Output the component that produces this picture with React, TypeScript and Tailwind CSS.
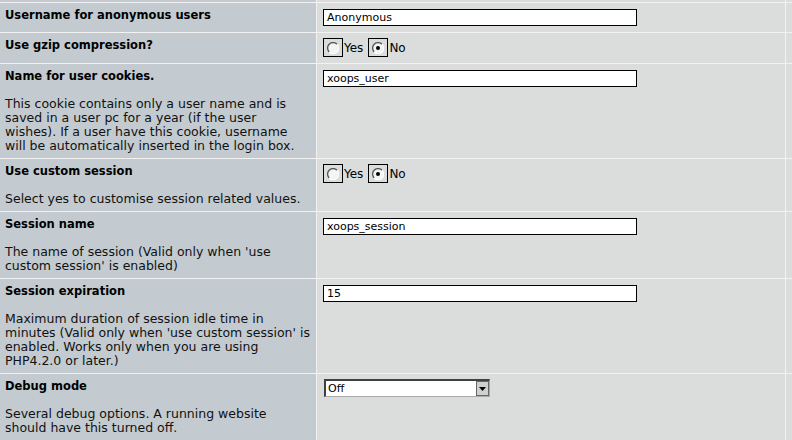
import type { ReactNode } from "react"

const font = "font-['DejaVu_Sans',Verdana,sans-serif]"

function TextBox({ value }: { value: string }) {
  return (
    <div className="h-[17px] w-[314px] border border-black bg-white pl-[3px] text-[11px] leading-[15px] text-black">
      {value}
    </div>
  )
}

function RadioMark({ checked }: { checked?: boolean }) {
  return (
    <span className="flex h-[19px] w-[20px] items-center justify-center border border-black">
      <svg width="12" height="12" viewBox="0 0 12 12">
        <circle cx="6" cy="6" r="5" fill="#f4f4f2" />
        <path d="M10 2.2 A5 5 0 0 0 2.2 10" fill="none" stroke="#555" strokeWidth="1.3" />
        <path d="M2.2 10 A5 5 0 0 0 10 2.2" fill="none" stroke="#fff" strokeWidth="1.3" />
        {checked && <circle cx="6" cy="6" r="2" fill="#000" />}
      </svg>
    </span>
  )
}

function YesNo({ yes }: { yes?: boolean }) {
  return (
    <div className="flex items-center text-[12px] text-black">
      <RadioMark checked={yes} />
      <span className="ml-px">Yes</span>
      <span className="ml-[5px]">
        <RadioMark checked={!yes} />
      </span>
      <span className="ml-px">No</span>
    </div>
  )
}

function Select({ value }: { value: string }) {
  return (
    <div className="ml-px flex h-[18px] w-[166px] border-t-2 border-l-2 border-b border-r border-t-[#404040] border-l-[#404040] border-b-[#aaa] border-r-[#aaa] bg-white">
      <span className="flex-1 pl-[2px] text-[11px] leading-[15px] text-black">{value}</span>
      <span className="flex w-[13px] items-center justify-center border border-[#666] bg-[#cfcfcf]">
        <svg width="7" height="4" viewBox="0 0 7 4">
          <path d="M0 0 H7 L3.5 4 Z" fill="#000" />
        </svg>
      </span>
    </div>
  )
}

interface Row {
  label: string
  desc?: string[]
  control: ReactNode
  height?: string
  pad: string
}

const rows: Row[] = [
  { label: "Username for anonymous users", control: <TextBox value="Anonymous" />, height: "h-[29px]", pad: "pt-[6px]" },
  { label: "Use gzip compression?", control: <YesNo />, height: "h-[30px]", pad: "pt-[5px]" },
  {
    label: "Name for user cookies.",
    desc: [
      "This cookie contains only a user name and is",
      "saved in a user pc for a year (if the user",
      "wishes). If a user have this cookie, username",
      "will be automatically inserted in the login box.",
    ],
    control: <TextBox value="xoops_user" />,
    pad: "pt-[6px]",
  },
  {
    label: "Use custom session",
    desc: ["Select yes to customise session related values."],
    control: <YesNo />,
    pad: "pt-[5px]",
  },
  {
    label: "Session name",
    desc: ["The name of session (Valid only when 'use", "custom session' is enabled)"],
    control: <TextBox value="xoops_session" />,
    pad: "pt-[6px]",
  },
  {
    label: "Session expiration",
    desc: [
      "Maximum duration of session idle time in",
      "minutes (Valid only when 'use custom session' is",
      "enabled. Works only when you are using",
      "PHP4.2.0 or later.)",
    ],
    control: <TextBox value="15" />,
    pad: "pt-[6px]",
  },
  {
    label: "Debug mode",
    desc: ["Several debug options. A running website", "should have this turned off."],
    control: <Select value="Off" />,
    pad: "pt-[5px]",
  },
]

export default function App() {
  return (
    <div className={`h-[440px] w-[792px] overflow-hidden bg-[#f1f2f1] ${font}`}>
      <div className="grid grid-cols-[316px_468px_6px] gap-px">
        <div className="h-[2px] bg-[#c3cbd0]" />
        <div className="h-[2px] bg-[#dadddb]" />
        <div className="h-[2px] bg-[#dadddb]" />
        {rows.map((row) => (
          <div key={row.label} className="contents">
            <div className={`overflow-hidden bg-[#c3cbd0] py-[5px] pl-[5px] leading-[14px] text-black ${row.height ?? ""}`}>
              <div className="text-[11.5px] font-bold">{row.label}</div>
              {row.desc && (
                <div className="mt-[14px] text-[12.5px] text-[#111]">
                  {row.desc.map((line) => (
                    <div key={line} className="whitespace-nowrap">
                      {line}
                    </div>
                  ))}
                </div>
              )}
            </div>
            <div className={`bg-[#dadddb] pl-[6px] ${row.pad}`}>{row.control}</div>
            <div className="bg-[#dadddb]" />
          </div>
        ))}
      </div>
    </div>
  )
}
